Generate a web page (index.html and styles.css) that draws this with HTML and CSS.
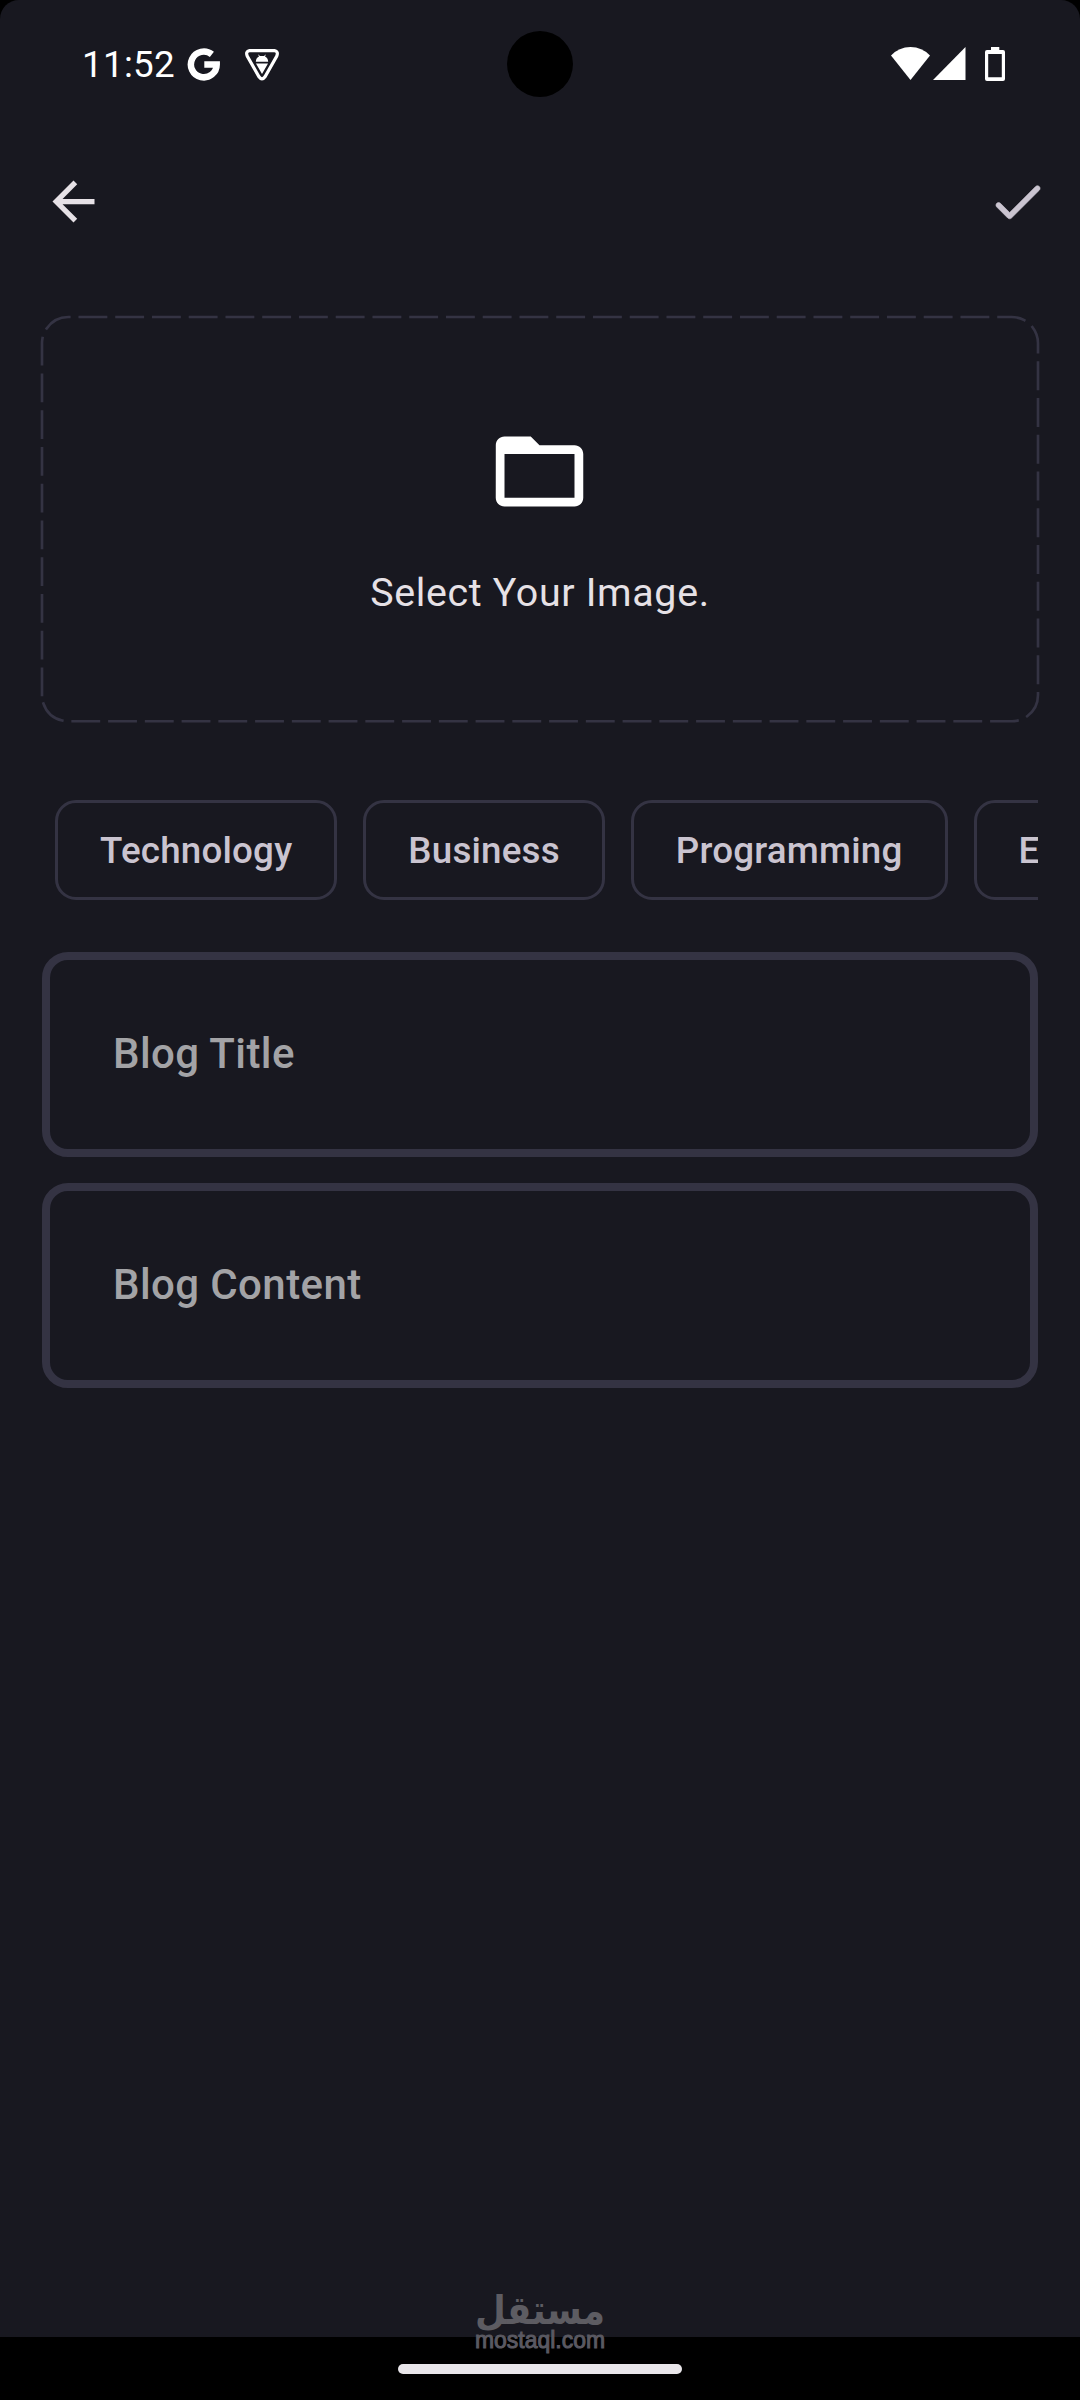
FILE: index.html
```html
<!DOCTYPE html>
<html lang="en">
<head>
<meta charset="utf-8">
<title>New blog</title>
<link rel="stylesheet" href="styles.css">
</head>
<body>
<div class="device">
  <div class="screen">
    <header class="status">
      <span class="clock">11:52</span>
      <svg class="google" width="34" height="34" viewBox="0 0 34 34"><path d="M24.9 7.4A12.9 12.9 0 1 0 29.7 17.4H17.3" fill="none" stroke="#fff" stroke-width="6.5"/></svg>
      <svg class="shield" width="36" height="34" viewBox="0 0 36 34"><path d="M5.5 2.6H30.5Q34.6 3.4 32.8 8L21 28.8Q18 33 15 28.8L3.2 8Q1.4 3.4 5.5 2.6Z" fill="none" stroke="#fff" stroke-width="3.2"/><path d="M11.8 13.7C12 10.5 13.3 9.3 15 8.5L14 6.3L16 7.9H20L22 6.3L21 8.5C22.7 9.3 24 10.5 24.2 13.7ZM12 15.5H24L18 26Z" fill="#fff"/></svg>
      <div class="system">
        <svg width="39" height="34" viewBox="0 0 39 34"><path d="M0 8.5Q8 0 19.5 0T39 8.5L19.5 33Z" fill="#fff"/></svg>
        <svg class="signal" width="33" height="34" viewBox="0 0 33 34"><path d="M0 33L32.5 0V33Z" fill="#fff"/></svg>
        <svg class="battery" width="20" height="34" viewBox="0 0 20 34"><path fill-rule="evenodd" d="M6 0H14.3V3H18Q20 3 20 5V32Q20 34 18 34H2Q0 34 0 32V5Q0 3 2 3H6ZM3.2 7V30.2H16.8V7Z" fill="#fff"/></svg>
      </div>
      <span class="camera"></span>
    </header>
    <nav class="appbar">
      <svg width="63" height="63" viewBox="0 0 24 24"><path d="M20 11H7.83l5.59-5.59L12 4l-8 8 8 8 1.41-1.41L7.83 13H20v-2z" fill="#e6e1e6"/></svg>
      <svg width="63" height="63" viewBox="0 0 24 24"><path d="M9 16.2l-3.5-3.5c-.39-.39-1.01-.39-1.4 0-.39.39-.39 1.01 0 1.4l4.19 4.19c.39.39 1.02.39 1.41 0L20.3 7.7c.39-.39.39-1.01 0-1.4-.39-.39-1.01-.39-1.4 0L9 16.2z" fill="#cac4d0" stroke="#cac4d0" stroke-width=".25"/></svg>
    </nav>
    <main class="content">
      <section class="picker">
        <svg class="dashes" width="1000" height="409" viewBox="0 0 1000 409"><path d="M2 380V28.25A26.25 26.25 0 0 1 28.25 2H971.75A26.25 26.25 0 0 1 998 28.25V380A26.25 26.25 0 0 1 971.75 406.25H28.25A26.25 26.25 0 0 1 2 380" fill="none" stroke="#343343" stroke-width="2.625" stroke-linecap="square" stroke-dasharray="26.25 10.5"/></svg>
        <svg class="folder" width="105" height="105" viewBox="0 0 24 24"><path d="M20 6h-8l-2-2H4c-1.1 0-1.99.9-1.99 2L2 18c0 1.1.9 2 2 2h16c1.1 0 2-.9 2-2V8c0-1.1-.9-2-2-2zm0 12H4V8h16v10z" fill="#fff"/></svg>
        <span class="prompt">Select Your Image.</span>
      </section>
      <div class="chips">
        <span class="chip">Technology</span>
        <span class="chip">Business</span>
        <span class="chip">Programming</span>
        <span class="chip">Entertainment</span>
      </div>
      <div class="field">Blog Title</div>
      <div class="field">Blog Content</div>
    </main>
  </div>
  <footer class="navbar"><span class="pill"></span></footer>
  <svg class="watermark" width="134" height="68" viewBox="0 0 134 68">
    <text class="brand" x="2" y="36" textLength="130" lengthAdjust="spacingAndGlyphs" direction="rtl" text-anchor="end">مستقل</text>
    <text class="domain" x="2" y="59.5" textLength="130" lengthAdjust="spacingAndGlyphs">mostaql.com</text>
  </svg>
</div>
</body>
</html>
```
FILE: styles.css
```css
* { box-sizing: border-box; }
body { margin: 0; background: #000; font-family: Roboto, sans-serif; }
svg { display: block; flex: none; }
.device { position: relative; width: 1080px; height: 2400px; display: flex; flex-direction: column; overflow: hidden; background: #000; }
.screen { flex: 1; background: #181820; border-radius: 19px 19px 0 0; overflow: hidden; }
.status { position: relative; height: 128px; padding: 0 75px 0 82px; display: flex; align-items: center; color: #fff; }
.clock { width: 105px; font-size: 36.75px; line-height: 43px; letter-spacing: 0.3px; }
.shield { margin-left: 23px; margin-top: 2px; }
.system { margin-left: auto; display: flex; }
.signal { margin-left: 3px; }
.battery { margin-left: 19px; }
.camera { position: absolute; left: 507px; top: 31px; width: 66px; height: 66px; border-radius: 50%; background: #000; }
.appbar { height: 147px; padding: 42px 31.5px 0 42px; display: flex; justify-content: space-between; }
.content { padding: 42px 42px 0; }
.picker { position: relative; height: 404px; display: flex; flex-direction: column; align-items: center; padding-top: 102px; }
.dashes { position: absolute; left: -2px; top: -2px; }
.folder { margin-right: 1px; }
.prompt { margin-top: 45px; font-size: 39.375px; line-height: 48px; letter-spacing: 0.66px; color: #e6e1e6; }
.chips { margin-top: 79px; padding-left: 13px; display: flex; gap: 26px; overflow: hidden; }
.chip { flex: none; height: 100px; padding: 0 42px; border: 3px solid #343343; border-radius: 21px; font-size: 36.75px; font-weight: 500; line-height: 96px; letter-spacing: 0.2px; color: #cac4d0; }
.field { height: 205px; margin-top: 52px; padding: 0 63px; border: 8px solid #343343; border-radius: 26px; font-size: 42px; font-weight: 500; line-height: 187px; letter-spacing: 0.4px; color: #a3a3a6; }
.field + .field { margin-top: 26px; }
.navbar { height: 63px; display: flex; justify-content: center; padding-top: 27px; }
.pill { width: 284px; height: 10px; border-radius: 5px; background: #e9e6ea; }
.watermark { position: absolute; left: 473px; top: 2288px; fill: #5d5c62; }
.brand { font: bold 40px "DejaVu Sans", sans-serif; }
.domain { font: 23px "Liberation Sans", sans-serif; fill: #5a5962; stroke: #5a5962; stroke-width: 1px; }
```
